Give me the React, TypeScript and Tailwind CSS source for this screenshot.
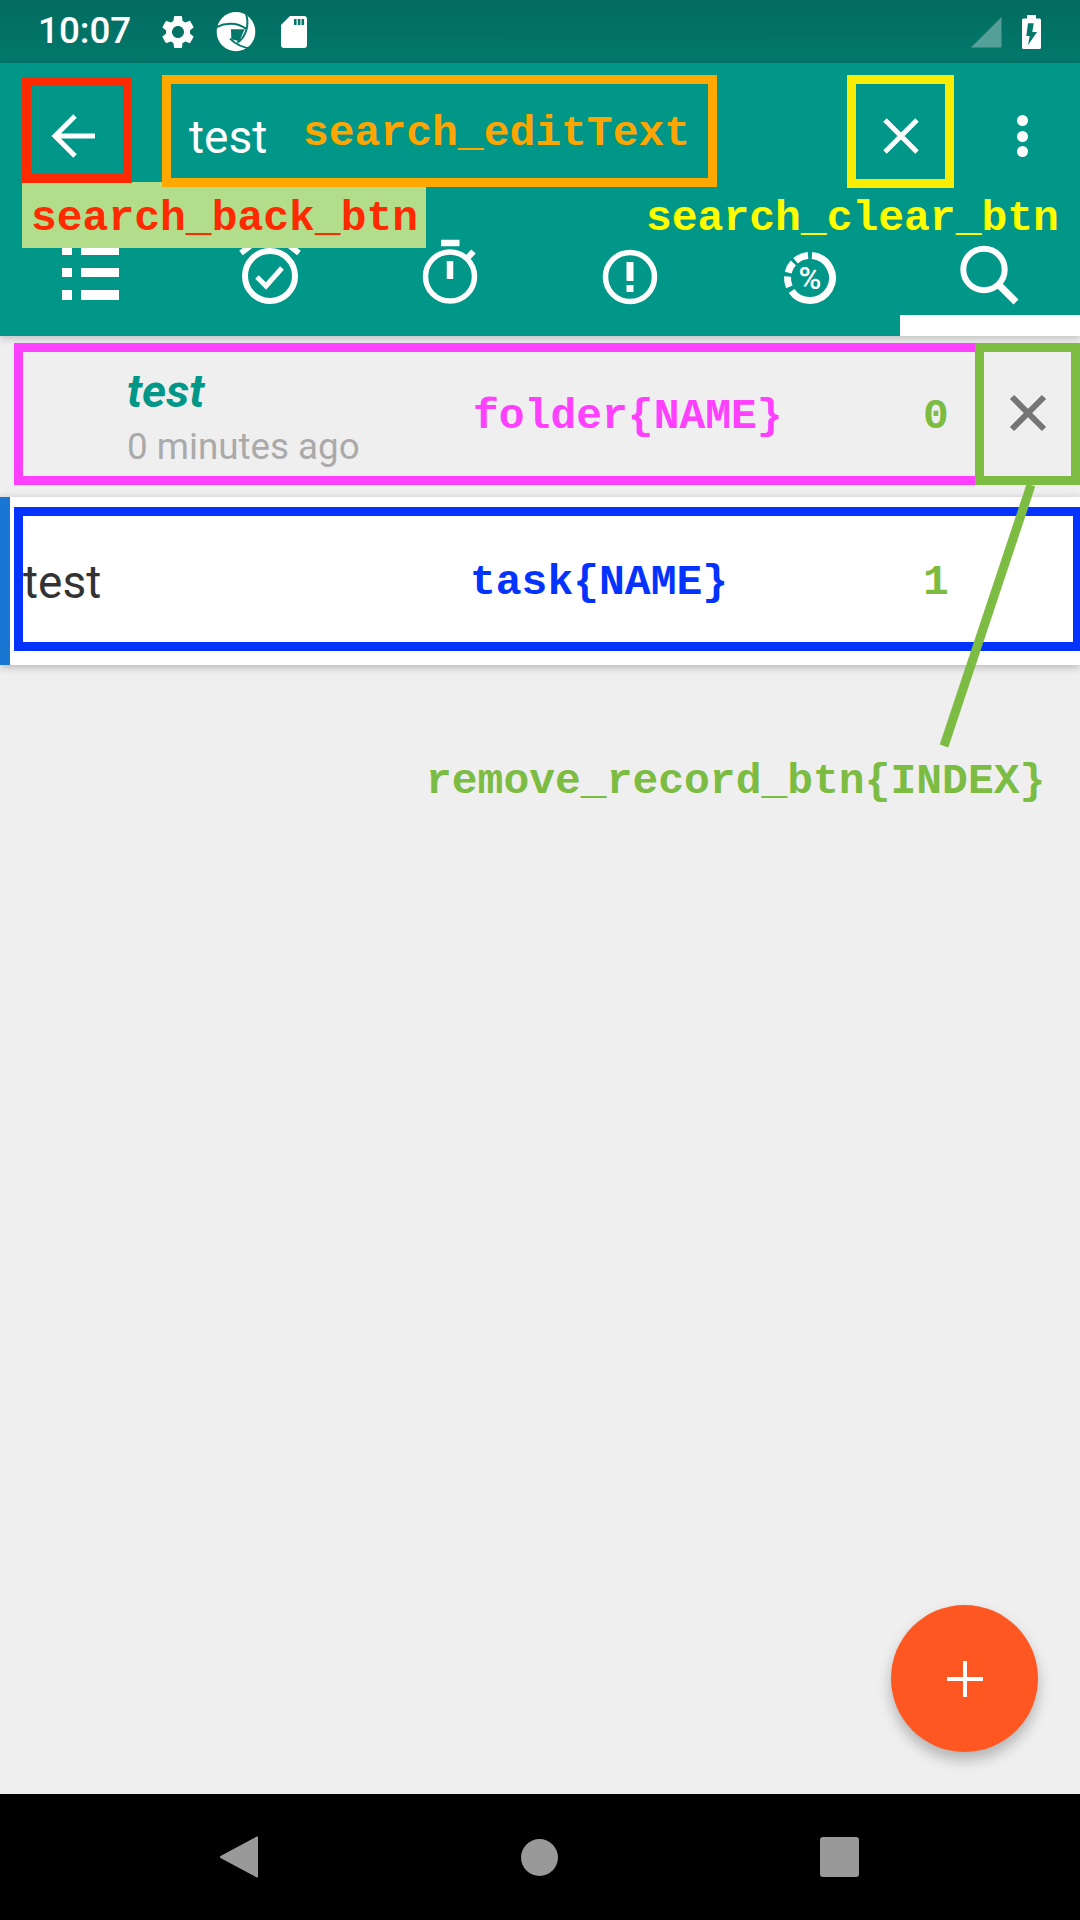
const MONO = "font-['Liberation_Mono',monospace] font-bold text-[43px] leading-[50px] whitespace-pre";

function pt(r: number, a: number, c = 50): string {
  const t = (a * Math.PI) / 180;
  return `${(c + r * Math.sin(t)).toFixed(2)} ${(c - r * Math.cos(t)).toFixed(2)}`;
}
function arc(r: number, a: number, b: number): string {
  return `M${pt(r, a)}A${r} ${r} 0 ${b - a > 180 ? 1 : 0} 1 ${pt(r, b)}`;
}

function Cross({ size = 50, color = "#fff", w = 5 }: { size?: number; color?: string; w?: number }) {
  return (
    <svg width={size} height={size} viewBox="0 0 50 50" fill="none" stroke={color} strokeWidth={w}>
      <path d="M9 9 41 41M41 9 9 41" />
    </svg>
  );
}

function ListIcon() {
  return (
    <svg width="80" height="80" viewBox="0 0 80 80" fill="#fff">
      <path d="M12 10h10v9H12zM31 10h38v9H31zM12 32h10v9H12zM31 32h38v9H31zM12 54h10v10H12zM31 54h38v10H31z" />
    </svg>
  );
}
function AlarmCheck() {
  return (
    <svg width="80" height="80" viewBox="0 0 80 80" fill="none" stroke="#fff">
      <circle cx="40" cy="40" r="25" strokeWidth="6" />
      <path d="M27 41 36 50 52 32" strokeWidth="5" />
      <path d="M11 17 20 10M69 17 60 10" strokeWidth="6" />
    </svg>
  );
}
function Timer() {
  return (
    <svg width="80" height="80" viewBox="0 0 80 80" fill="none" stroke="#fff">
      <circle cx="40" cy="40.5" r="24.5" strokeWidth="5.5" />
      <path d="M31 7h18.500M40 25v18" strokeWidth="6.500" />
      <path d="M56.500 23 63.500 15.500" strokeWidth="6" />
    </svg>
  );
}
function Alert() {
  return (
    <svg width="80" height="80" viewBox="0 0 80 80" fill="none" stroke="#fff">
      <circle cx="40" cy="41" r="24.500" strokeWidth="5.500" />
      <path d="M40 26v19M40 49v7" strokeWidth="7" />
    </svg>
  );
}
function Percent() {
  return (
    <svg width="80" height="80" viewBox="10 10 80 80" fill="none" stroke="#fff">
      <g strokeWidth="7" transform="translate(0 2)">
        <path d={arc(22.500, 5, 235)} />
        <path d={arc(22.500, 320, 355)} />
        <path d={arc(22.500, 284, 312)} />
        <path d={arc(22.500, 247, 274)} />
      </g>
      <text x="50" y="63" textAnchor="middle" fill="#fff" stroke="none" className="font-['Roboto',sans-serif] font-medium text-[31px]">%</text>
    </svg>
  );
}
function Search() {
  return (
    <svg width="80" height="80" viewBox="0 0 80 80" fill="none" stroke="#fff">
      <circle cx="34" cy="33.500" r="20.700" strokeWidth="6" />
      <path d="M49 49 66 66" strokeWidth="7" />
    </svg>
  );
}

function Gear() {
  return (
    <svg width="40" height="40" viewBox="0 0 24 24" fill="#fff">
      <path d="M19.140 12.940c.04-.3.06-.61.06-.94 0-.32-.02-.64-.07-.94l2.030-1.580c.18-.14.23-.41.12-.61l-1.920-3.320c-.12-.22-.37-.29-.59-.22l-2.390.96c-.5-.38-1.030-.7-1.620-.94l-.36-2.540c-.04-.24-.24-.41-.48-.41h-3.840c-.24 0-.43.17-.47.41l-.36 2.540c-.59.24-1.130.57-1.620.94l-2.390-.96c-.22-.08-.47 0-.59.22L2.740 8.870c-.12.21-.08.47.12.61l2.030 1.580c-.05.3-.09.63-.09.94s.02.64.07.94l-2.030 1.580c-.18.14-.23.41-.12.61l1.920 3.320c.12.22.37.29.59.22l2.390-.96c.5.38 1.030.7 1.620.94l.36 2.540c.05.24.24.41.48.41h3.840c.24 0 .44-.17.47-.41l.36-2.540c.59-.24 1.130-.56 1.620-.94l2.390.96c.22.08.47 0 .59-.22l1.920-3.320c.12-.22.07-.47-.12-.61l-2.010-1.580zM12 15.600c-1.980 0-3.600-1.620-3.600-3.600s1.620-3.600 3.600-3.600 3.600 1.620 3.600 3.600-1.620 3.600-3.600 3.600z" />
    </svg>
  );
}
function Shutter() {
  return (
    <svg width="40" height="40" viewBox="198 20 120 120">
      <ellipse cx="258" cy="79" rx="58" ry="59" fill="#fff" />
      <g fill="none" stroke="#03776a" strokeWidth="6">
        <path d="M198 66C225 52 260 50 288 70" />
        <path d="M288 26C298 55 290 95 262 112" />
        <path d="M305 130C285 128 262 122 240 100" />
      </g>
      <path d="M243 72 284 72 268 108 244 102Z" fill="#03776a" />
    </svg>
  );
}
function Sd() {
  return (
    <svg width="26" height="32" viewBox="0 0 26 32">
      <path d="M9 0H23a3 3 0 0 1 3 3V29a3 3 0 0 1-3 3H3a3 3 0 0 1-3-3V9Z" fill="#fff" />
      <path d="M13 3h2.600v6H13zM16.800 3h2.600v6h-2.600zM20.500 3h2.600v6h-2.600z" fill="#03776a" />
    </svg>
  );
}
function Signal() {
  return (
    <svg width="32" height="32" viewBox="0 0 32 32">
      <path d="M31.500 1V30a1.500 1.500 0 0 1-1.500 1.500H1Z" fill="#fff" fillOpacity="0.32" stroke="#fff" strokeOpacity="0" />
    </svg>
  );
}
function Battery() {
  return (
    <svg width="19" height="34" viewBox="0 0 19 34">
      <path d="M5 0h9v3.500h3.500a1.500 1.500 0 0 1 1.500 1.500V32.500a1.500 1.500 0 0 1-1.500 1.500H1.500A1.500 1.500 0 0 1 0 32.500V5a1.500 1.500 0 0 1 1.500-1.500H5Z" fill="#fff" />
      <path d="M6 8.300h5.700L10.300 17H15L6 30.300 7.700 21H4.300Z" fill="#03776a" />
    </svg>
  );
}

export default function App() {
  return (
    <div className="relative flex h-[1920px] w-[1080px] flex-col overflow-hidden bg-[#efefef] font-['Roboto',sans-serif]">
      {/* Status bar */}
      <div className="flex h-[63px] items-center bg-linear-to-b from-[#036b5f] to-[#02796c] text-white">
        <span className="ml-[38px] w-[120px] text-[36.750px] font-medium leading-none">10:07</span>
        <Gear />
        <span className="ml-[18px]"><Shutter /></span>
        <span className="ml-[25px]"><Sd /></span>
        <span className="ml-auto"><Signal /></span>
        <span className="ml-[20px] mr-[39px]"><Battery /></span>
      </div>

      {/* Toolbar */}
      <div className="relative z-10 flex flex-col bg-[#009688] shadow-[0_2px_8px_rgba(0,0,0,0.22)]">
        <div className="flex h-[146px] items-center">
          <div className="flex w-[148px] justify-center">
            <svg width="50" height="50" viewBox="0 0 50 50" fill="none" stroke="#fff" strokeWidth="5">
              <path d="M26 5 6 25 26 45M6 25H46" />
            </svg>
          </div>
          <span className="flex-1 pl-[41px] pt-[2px] text-[46px] font-normal leading-none text-white">test</span>
          <div className="flex w-[100px] justify-center"><Cross /></div>
          <div className="ml-[21px] mr-[8px] flex w-[100px] flex-col items-center gap-[4.500px]">
            <span className="h-[11px] w-[11px] rounded-full bg-white" />
            <span className="h-[11px] w-[11px] rounded-full bg-white" />
            <span className="h-[11px] w-[11px] rounded-full bg-white" />
          </div>
        </div>
        <div className="grid h-[106px] grid-cols-6 pt-[27px]">
          <div className="flex justify-center"><ListIcon /></div>
          <div className="flex justify-center"><AlarmCheck /></div>
          <div className="flex justify-center"><Timer /></div>
          <div className="flex justify-center"><Alert /></div>
          <div className="flex justify-center"><Percent /></div>
          <div className="flex justify-center"><Search /></div>
        </div>
        <div className="grid h-[21px] grid-cols-6">
          <div className="col-start-6 bg-white" />
        </div>
      </div>

      {/* List */}
      <div className="flex flex-1 flex-col">
        <div className="flex h-[161px] items-center pb-[7px]">
          <div className="flex flex-1 flex-col pl-[127px] pt-[9px]">
            <span className="text-[46px] font-bold italic leading-[50px] text-[#009688]">test</span>
            <span className="mt-[9px] text-[36.750px] leading-[44px] text-[#aaaaaa]">0 minutes ago</span>
          </div>
          <div className="flex w-[105px] justify-center"><Cross color="#757575" w={6} /></div>
        </div>
        <div className="flex h-[168px] bg-white shadow-[0_2px_8px_rgba(0,0,0,0.25)]">
          <div className="w-[10px] bg-[#1976d2]" />
          <span className="self-center pl-[13px] pt-[2px] text-[46px] font-normal leading-none text-[#333333]">test</span>
        </div>
      </div>

      {/* Navigation bar */}
      <div className="flex h-[126px] items-center bg-black pl-[220px]">
        <svg width="38" height="42" viewBox="0 0 38 42">
          <path d="M37 1.500V40.500L1 21Z" fill="#999999" stroke="#999999" strokeWidth="2" strokeLinejoin="round" />
        </svg>
        <span className="ml-[263px] h-[37px] w-[37px] rounded-full bg-[#999999]" />
        <span className="ml-[262px] h-[40px] w-[39px] rounded-[3px] bg-[#999999]" />
      </div>

      {/* Floating action button */}
      <div className="absolute left-[891px] top-[1605px] z-20 flex h-[147px] w-[147px] items-center justify-center rounded-full bg-[#ff5722] shadow-[0_8px_14px_rgba(0,0,0,0.25)]">
        <svg width="36" height="36" viewBox="0 0 36 36" stroke="#fff" strokeWidth="4">
          <path d="M18 0V36M0 18H36" />
        </svg>
      </div>

      {/* Annotation overlay */}
      <div className="absolute left-[22px] top-[182px] z-30 h-[66px] w-[404px] bg-[#b2de8c]" />
      <div className="absolute left-[22px] top-[77px] z-30 h-[106px] w-[110px] border-[9px] border-[#ff2a00]" />
      <div className="absolute left-[162px] top-[75px] z-30 h-[112px] w-[555px] border-[9px] border-[#ffa800]" />
      <div className="absolute left-[847px] top-[75px] z-30 h-[113px] w-[107px] border-[9px] border-[#f8ec00]" />
      <div className="absolute left-[14px] top-[343px] z-30 h-[142px] w-[1066px] border-[9px] border-[#ff40ff]" />
      <div className="absolute left-[14px] top-[507px] z-30 h-[144px] w-[1066px] border-[9px] border-r-[7px] border-[#0433ff]" />
      <svg className="absolute left-0 top-0 z-30" width="1080" height="800" fill="none">
        <path d="M1031 485 944 746" stroke="#7cbc42" strokeWidth="9" />
      </svg>
      <div className="absolute left-[975px] top-[343px] z-30 h-[142px] w-[105px] border-[9px] border-[#7cbc42]" />

      <span className={`absolute left-[31px] top-[194px] z-30 text-[#ff2a00] ${MONO}`}>search_back_btn</span>
      <span className={`absolute left-[303px] top-[109px] z-30 text-[#ffa500] ${MONO}`}>search_editText</span>
      <span className={`absolute left-[646px] top-[194px] z-30 text-[#ffff00] ${MONO}`}>search_clear_btn</span>
      <span className={`absolute left-[473px] top-[392px] z-30 text-[#ff40ff] ${MONO}`}>folder{"{NAME}"}</span>
      <span className={`absolute left-[923px] top-[392px] z-30 text-[#7cbc42] ${MONO}`}>0</span>
      <span className={`absolute left-[470px] top-[558px] z-30 text-[#0433ff] ${MONO}`}>task{"{NAME}"}</span>
      <span className={`absolute left-[923px] top-[558px] z-30 text-[#7cbc42] ${MONO}`}>1</span>
      <span className={`absolute left-[426px] top-[757px] z-30 text-[#7cbc42] ${MONO}`}>remove_record_btn{"{INDEX}"}</span>
    </div>
  );
}
